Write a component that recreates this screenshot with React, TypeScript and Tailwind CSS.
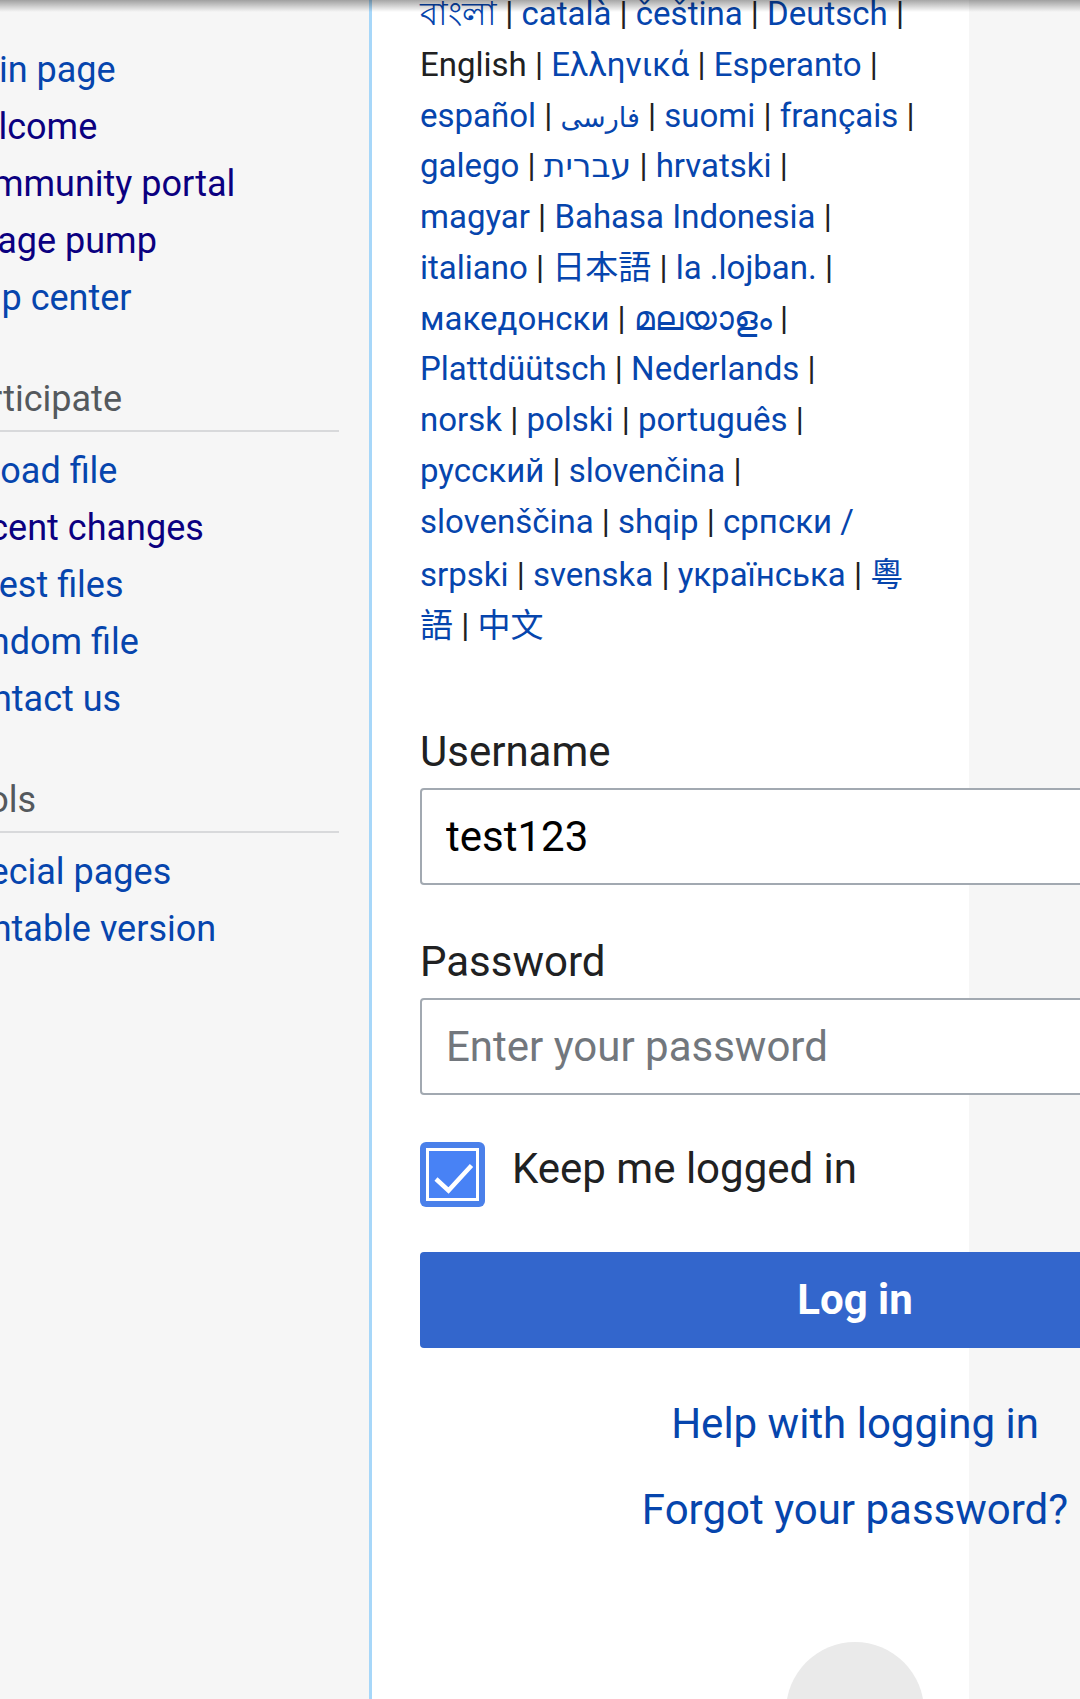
import React from "react";

type Lang = { text: string; link?: boolean; cls?: string };

const langLines: Lang[][] = [
  [{ text: "বাংলা", link: true }, { text: "català", link: true }, { text: "čeština", link: true }, { text: "Deutsch", link: true }],
  [{ text: "English" }, { text: "Ελληνικά", link: true }, { text: "Esperanto", link: true }],
  [{ text: "español", link: true }, { text: "فارسی", link: true, cls: "text-[27px]" }, { text: "suomi", link: true }, { text: "français", link: true }],
  [{ text: "galego", link: true }, { text: "עברית", link: true }, { text: "hrvatski", link: true }],
  [{ text: "magyar", link: true }, { text: "Bahasa Indonesia", link: true }],
  [{ text: "italiano", link: true }, { text: "日本語", link: true }, { text: "la .lojban.", link: true }],
  [{ text: "македонски", link: true }, { text: "മലയാളം", link: true }],
  [{ text: "Plattdüütsch", link: true }, { text: "Nederlands", link: true }],
  [{ text: "norsk", link: true }, { text: "polski", link: true }, { text: "português", link: true }],
  [{ text: "русский", link: true }, { text: "slovenčina", link: true }],
];

const navMain = [
  { label: "Main page", visited: false },
  { label: "Welcome", visited: true },
  { label: "Community portal", visited: true },
  { label: "Village pump", visited: true },
  { label: "Help center", visited: false },
];

const navParticipate = [
  { label: "Upload file", visited: false },
  { label: "Recent changes", visited: true },
  { label: "Latest files", visited: false },
  { label: "Random file", visited: false },
  { label: "Contact us", visited: false },
];

const navTools = [
  { label: "Special pages", visited: false },
  { label: "Printable version", visited: false },
];

function NavItem({ label, visited }: { label: string; visited: boolean }) {
  return (
    <a
      href="#"
      className={`block h-[57px] whitespace-nowrap leading-[57px] ${
        visited ? "text-[#0b0080]" : "text-[#0645ad]"
      }`}
    >
      {label}
    </a>
  );
}

function NavSection({ title, items }: { title: string; items: { label: string; visited: boolean }[] }) {
  return (
    <div className="mt-[44px]">
      <div className="h-[57px] whitespace-nowrap leading-[57px] text-[#54595d]">{title}</div>
      <div className="mt-[2px] h-[2px] bg-[#d8d9db]" />
      <div className="mt-[11px]">
        {items.map((item) => (
          <NavItem key={item.label} {...item} />
        ))}
      </div>
    </div>
  );
}

const Pipe = () => <span className="text-[#202122]"> | </span>;

function LangWord({ text, link, cls }: Lang) {
  return link ? (
    <a href="#" className={`text-[#0645ad] ${cls ?? ""}`}>
      {text}
    </a>
  ) : (
    <span className="text-[#202122]">{text}</span>
  );
}

export default function App() {
  return (
    <div className="relative flex h-[1699px] w-[1080px] overflow-hidden bg-[#f6f6f6] font-['Roboto','DejaVu_Sans','Noto_Sans_CJK_JP',sans-serif]">
      {/* Drawer */}
      <aside className="h-full w-[372px] shrink-0 overflow-hidden border-r-[3px] border-[#a7d7f9] bg-[#f6f6f6]">
        <div className="ml-[-52px] w-[391px] pt-[42px] text-[36px]">
          {navMain.map((item) => (
            <NavItem key={item.label} {...item} />
          ))}
          <NavSection title="Participate" items={navParticipate} />
          <NavSection title="Tools" items={navTools} />
        </div>
      </aside>

      {/* Content */}
      <main className="h-full flex-1 bg-[#f6f6f6]">
        <div className="flex h-full w-[597px] flex-col bg-white pl-[48px]">
          <div className="w-[870px] shrink-0">
            {/* Language list */}
            <div className="mt-[-11px] whitespace-nowrap text-[33px] leading-[50.75px]">
              {langLines.map((line, i) => (
                <div key={i} className="h-[50.75px]">
                  {line.map((w, j) => (
                    <React.Fragment key={j}>
                      {j > 0 && <Pipe />}
                      <LangWord {...w} />
                    </React.Fragment>
                  ))}
                  <Pipe />
                </div>
              ))}
              <div className="h-[50.75px]">
                <a href="#" className="text-[#0645ad]">slovenščina</a>
                <Pipe />
                <a href="#" className="text-[#0645ad]">shqip</a>
                <Pipe />
                <a href="#" className="text-[#0645ad]">српски /</a>
              </div>
              <div className="h-[50.75px]">
                <a href="#" className="text-[#0645ad]">srpski</a>
                <Pipe />
                <a href="#" className="text-[#0645ad]">svenska</a>
                <Pipe />
                <a href="#" className="text-[#0645ad]">українська</a>
                <Pipe />
                <a href="#" className="font-['Noto_Sans_CJK_TC',sans-serif] text-[#0645ad]">粵</a>
              </div>
              <div className="h-[50.75px]">
                <a href="#" className="font-['Noto_Sans_CJK_TC',sans-serif] text-[#0645ad]">語</a>
                <Pipe />
                <a href="#" className="font-['Noto_Sans_CJK_SC',sans-serif] text-[#0645ad]">中文</a>
              </div>
            </div>

            {/* Login form */}
            <form className="mt-[78px] text-[42px] text-[#202122]" onSubmit={(e) => e.preventDefault()}>
              <label className="block leading-[49px]">Username</label>
              <input
                readOnly
                value="test123"
                className="mt-[12px] block h-[97px] w-full rounded-[4px] border-2 border-[#a2a9b1] bg-white px-[24px] text-[42px] text-black outline-none"
              />

              <label className="mt-[52px] block leading-[49px]">Password</label>
              <input
                type="password"
                placeholder="Enter your password"
                className="mt-[12px] block h-[97px] w-full rounded-[4px] border-2 border-[#a2a9b1] bg-white px-[24px] text-[42px] text-black outline-none placeholder:text-[#72777d]"
              />

              <div className="mt-[47px] flex items-start">
                <div className="h-[65px] w-[65px] shrink-0 rounded-[6px] bg-[#4a80ea] p-[6px]">
                  <div className="h-full w-full bg-white p-[3px]">
                    <div className="h-full w-full bg-[#4882f5]">
                      <svg viewBox="0 0 47 47" className="h-full w-full">
                        <path
                          d="M7 28 L19.5 39.5 L42.5 14.5"
                          fill="none"
                          stroke="#fff"
                          strokeWidth="4.5"
                        />
                      </svg>
                    </div>
                  </div>
                </div>
                <span className="ml-[27px] mt-[2px] leading-[49px]">Keep me logged in</span>
              </div>

              <button
                type="submit"
                className="mt-[45px] block h-[96px] w-full rounded-[4px] bg-[#3366cc] text-[42px] font-bold text-white"
              >
                Log in
              </button>

              <div className="mt-[51px] text-center leading-[49px]">
                <a href="#" className="text-[#0645ad]">Help with logging in</a>
              </div>
              <div className="mt-[37px] text-center leading-[49px]">
                <a href="#" className="text-[#0645ad]">Forgot your password?</a>
              </div>

              <div className="mx-auto mt-[108px] h-[138px] w-[138px] rounded-full bg-[#eaeaea]" />
            </form>
          </div>
        </div>
      </main>

      {/* Header shadow */}
      <div className="pointer-events-none absolute inset-x-0 top-0 h-[12px] bg-linear-to-b from-black/35 to-transparent" />
    </div>
  );
}
